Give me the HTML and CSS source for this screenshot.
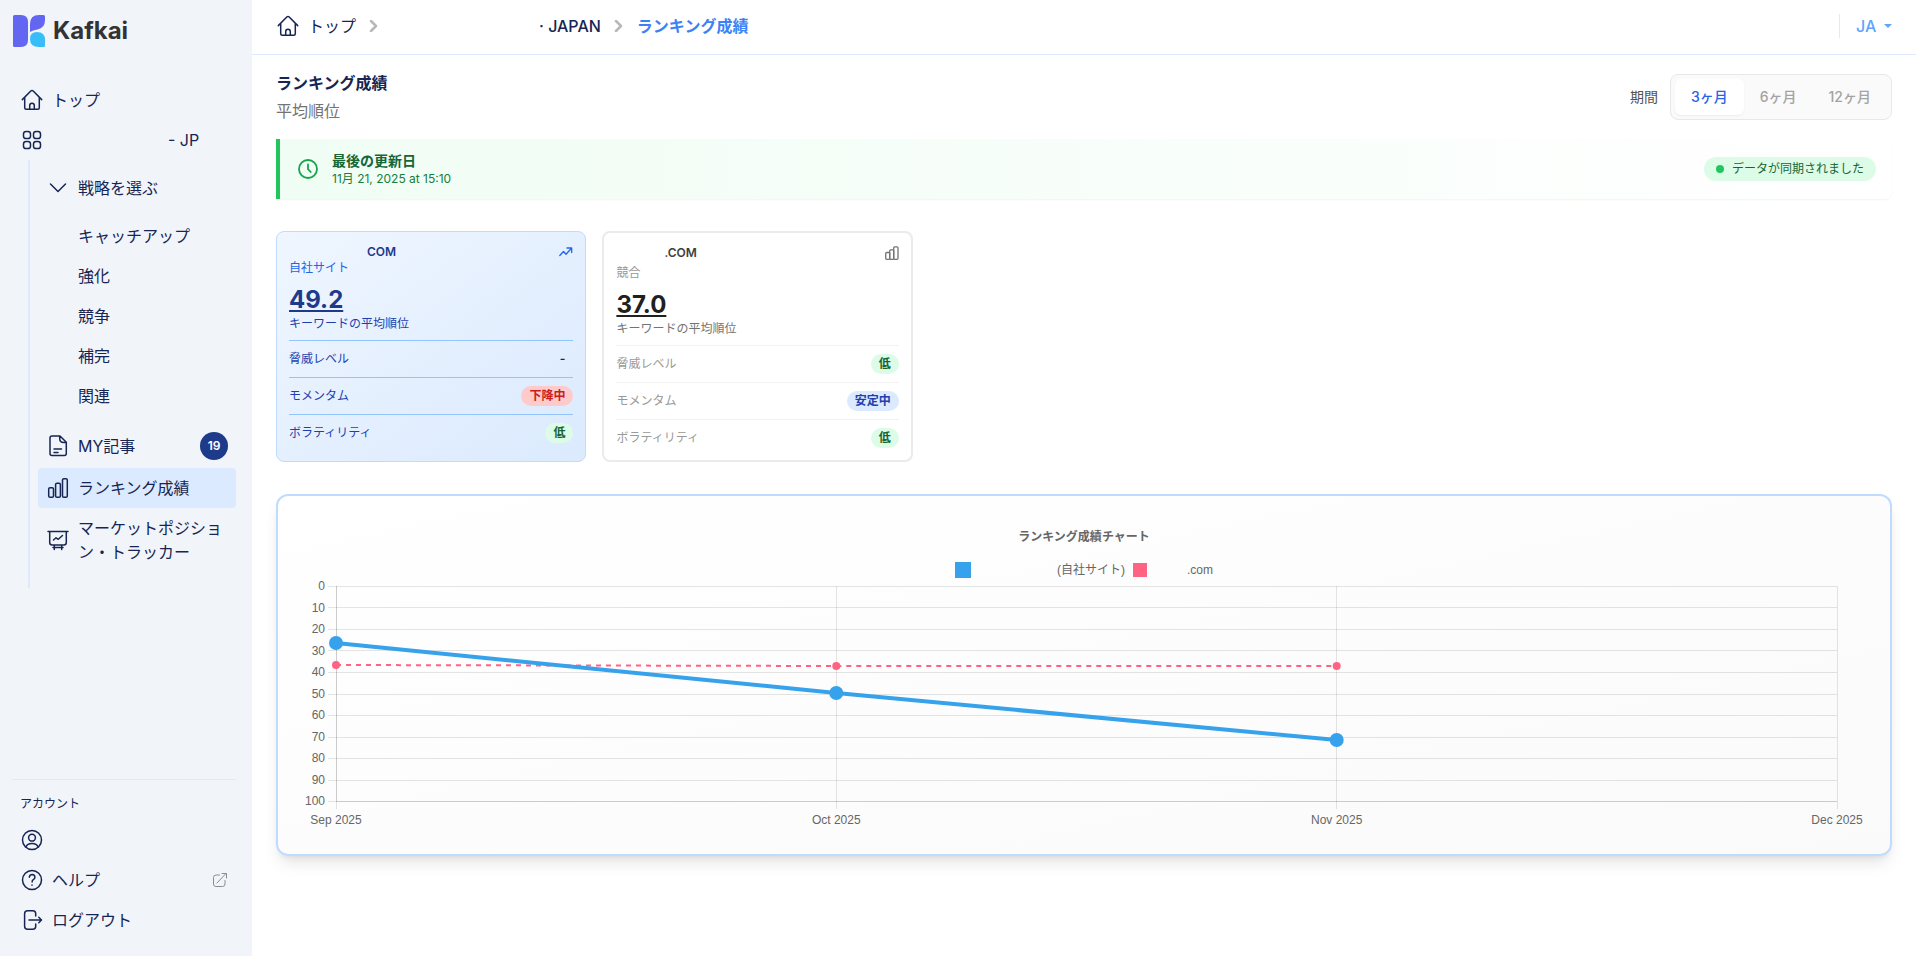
FILE: index.html
```html
<!DOCTYPE html>
<html lang="ja">
<head>
    <meta charset="UTF-8">
    <title>ランキング成績 - Kafkai</title>
    <meta name="viewport" content="width=device-width, initial-scale=1">
    <link rel="stylesheet" href="styles.css">
</head>
<body>
    <!-- shared icons -->
    <svg class="sprite" aria-hidden="true">
        <symbol id="icon-home" viewBox="0 0 24 24">
            <path d="M2.3 11.6 10.8 3q1.2-1.1 2.4 0l8.5 8.6M4.7 9.4v10.4q0 1.5 1.5 1.5h11.6q1.5 0 1.5-1.5V9.4M9.7 21.2v-3.6q0-2.3 2.3-2.3t2.3 2.3v3.6"/>
        </symbol>
        <symbol id="icon-bars" viewBox="0 0 24 24">
            <rect x="2.7" y="11.7" width="4.8" height="9.6" rx="1.4"/>
            <rect x="9.6" y="7.2" width="4.8" height="14.1" rx="1.4"/>
            <rect x="16.5" y="2.7" width="4.8" height="18.6" rx="1.4"/>
        </symbol>
        <symbol id="icon-next" viewBox="0 0 12 12">
            <path d="m3 1 5 5-5 5"/>
        </symbol>
    </svg>

    <div class="layout">
        <aside class="sidebar">
            <a href="#" class="logo">
                <svg viewBox="0 0 32 32" aria-hidden="true">
                    <path fill="#6366f1" d="M1.5 0H8q7 0 7 7v18q0 7-7 7H1.500Q0 32 0 30.500v-29Q0 0 1.500 0Z"/>
                    <path fill="#6366f1" d="M17 17V9q0-9 9-9h4.500Q32 0 32 1.500V5q0 8-7.500 9.500-5 .5-7.500 2.500Z"/>
                    <path fill="#38bdf8" d="M24 17q8 0 8 8v5.500q0 1.500-1.500 1.500H26q-9 0-9-8 0-7 7-7Z"/>
                </svg>
                <span>Kafkai</span>
            </a>

            <nav class="menu" aria-label="メイン">
                <a href="#" class="item"><svg class="icon"><use href="#icon-home"/></svg>トップ</a>
                <a href="#" class="item">
                    <svg class="icon" viewBox="0 0 24 24">
                        <rect x="3.500" y="3.500" width="7" height="7" rx="2.600"/>
                        <rect x="13.500" y="3.500" width="7" height="7" rx="2.600"/>
                        <rect x="3.500" y="13.500" width="7" height="7" rx="2.600"/>
                        <rect x="13.500" y="13.500" width="7" height="7" rx="2.600"/>
                    </svg>
                    <span class="project">- JP</span>
                </a>

                <div class="tree">
                    <a href="#" class="item">
                        <svg class="icon" viewBox="0 0 24 24"><path d="m4.500 8 7.500 7.500L19.500 8"/></svg>戦略を選ぶ
                    </a>
                    <ul class="strategies">
                        <li><a href="#" class="item">キャッチアップ</a></li>
                        <li><a href="#" class="item">強化</a></li>
                        <li><a href="#" class="item">競争</a></li>
                        <li><a href="#" class="item">補完</a></li>
                        <li><a href="#" class="item">関連</a></li>
                    </ul>
                    <a href="#" class="item">
                        <svg class="icon" viewBox="0 0 24 24">
                            <path d="M14 2H6Q4 2 4 4v15.500q0 2 2 2h12.300q2 0 2-2V8.300ZM13.700 2v2.500q0 4 4 4h2.500M8 15h7.500M8 18.500h4"/>
                        </svg>MY記事<span class="count">19</span>
                    </a>
                    <a href="#" class="item active" aria-current="page"><svg class="icon"><use href="#icon-bars"/></svg>ランキング成績</a>
                    <a href="#" class="item">
                        <svg class="icon" viewBox="0 0 24 24">
                            <path d="M2 3.500h20M3.700 3.500v11q0 2.500 2.500 2.500h11.600q2.500 0 2.500-2.500v-11M8.300 17v4.500M15.700 17v4.500M7 19.500h10M7.500 12l2.500-2.200 2.300 1.500 4.200-3.800"/>
                        </svg>
                        <span>マーケットポジション・トラッカー</span>
                    </a>
                </div>
            </nav>

            <nav class="account" aria-label="アカウント">
                <h2>アカウント</h2>
                <a href="#" class="item" aria-label="プロフィール">
                    <svg class="icon" viewBox="0 0 24 24">
                        <circle cx="12" cy="12" r="9.500"/><circle cx="12" cy="9.700" r="3.400"/>
                        <path d="M5.800 19q1.500-3.500 6.200-3.500t6.200 3.500"/>
                    </svg>
                </a>
                <a href="#" class="item">
                    <svg class="icon" viewBox="0 0 24 24">
                        <circle cx="12" cy="12" r="9.500"/>
                        <path d="M9.300 9.200q.5-2.600 2.900-2.600 2.700.2 2.700 2.700 0 1.500-1.600 2.400-1.200.8-1.200 2.300M12 17v.3"/>
                    </svg>ヘルプ
                    <svg class="external" viewBox="0 0 16 16" aria-hidden="true">
                        <path d="M7.500 3H4Q1.500 3 1.500 5.500V12q0 2.500 2.500 2.500h6.500Q13 14.500 13 12V8.500M5 11l9-9.500M10 1.500h4.500V6"/>
                    </svg>
                </a>
                <a href="#" class="item">
                    <svg class="icon" viewBox="0 0 24 24">
                        <path d="M15.700 8V5.700q0-3-3-3H7.600q-3 0-3 3v12.600q0 3 3 3h5.100q3 0 3-3V16M9 12h12.500M18.800 9.300l2.700 2.700-2.700 2.700"/>
                    </svg>ログアウト
                </a>
            </nav>
        </aside>

        <div class="page">
            <header class="topbar">
                <nav class="breadcrumb" aria-label="パンくず">
                    <a href="#" class="home"><svg class="icon"><use href="#icon-home"/></svg>トップ</a>
                    <svg class="next"><use href="#icon-next"/></svg>
                    <a href="#" class="site">· JAPAN</a>
                    <svg class="next"><use href="#icon-next"/></svg>
                    <span class="current">ランキング成績</span>
                </nav>
                <div class="language">
                    <select aria-label="言語">
                        <option>JA</option>
                        <option>EN</option>
                    </select>
                </div>
            </header>

            <main>
                <div class="heading">
                    <div>
                        <h1>ランキング成績</h1>
                        <p>平均順位</p>
                    </div>
                    <div class="period">
                        <span id="period-label">期間</span>
                        <div class="segments" role="group" aria-labelledby="period-label">
                            <button type="button" class="selected" aria-pressed="true">3ヶ月</button>
                            <button type="button" aria-pressed="false">6ヶ月</button>
                            <button type="button" aria-pressed="false">12ヶ月</button>
                        </div>
                    </div>
                </div>

                <section class="updated">
                    <svg class="clock" viewBox="0 0 20 20" aria-hidden="true"><circle cx="10" cy="10" r="9"/><path d="M10 5.500v4.700l2.700 2.800"/></svg>
                    <div>
                        <h2>最後の更新日</h2>
                        <p>11月 21, 2025 at 15:10</p>
                    </div>
                    <span class="synced">データが同期されました</span>
                </section>

                <section class="cards">
                    <article class="card own">
                        <div class="card-head">
                            <h3>COM</h3>
                            <svg viewBox="0 0 14 14" aria-hidden="true"><path d="M.8 10.500 4.500 6.500 7 9.300l5.500-6M8 3h4.700v4.500"/></svg>
                        </div>
                        <p class="kind">自社サイト</p>
                        <a href="#" class="rank">49.2</a>
                        <p class="caption">キーワードの平均順位</p>
                        <dl>
                            <div><dt>脅威レベル</dt><dd class="tag">-</dd></div>
                            <div><dt>モメンタム</dt><dd class="tag red">下降中</dd></div>
                            <div><dt>ボラティリティ</dt><dd class="tag green">低</dd></div>
                        </dl>
                    </article>

                    <article class="card rival">
                        <div class="card-head">
                            <h3>.COM</h3>
                            <svg viewBox="0 0 14 14" aria-hidden="true"><rect x=".7" y="6.500" width="4" height="6.800" rx="1"/><rect x="4.700" y="3.800" width="4" height="9.500" rx="1"/><rect x="8.700" y=".8" width="4.300" height="12.500" rx="1"/></svg>
                        </div>
                        <p class="kind">競合</p>
                        <a href="#" class="rank">37.0</a>
                        <p class="caption">キーワードの平均順位</p>
                        <dl>
                            <div><dt>脅威レベル</dt><dd class="tag green">低</dd></div>
                            <div><dt>モメンタム</dt><dd class="tag blue">安定中</dd></div>
                            <div><dt>ボラティリティ</dt><dd class="tag green">低</dd></div>
                        </dl>
                    </article>
                </section>

                <section class="chart">
                    <h2>ランキング成績チャート</h2>
                    <ul class="legend">
                        <li class="own-site">(自社サイト)</li>
                        <li class="rival-site">.com</li>
                    </ul>
                    <!-- x in percent of the plot, y is 2.15px per rank -->
                    <div class="plot-area">
                        <svg class="plot" role="img" aria-label="ランキング成績チャート">
                            <g class="grid">
                                <line x1="-8" x2="100%" y1="0" y2="0"/>
                                <line x1="-8" x2="100%" y1="21" y2="21"/>
                                <line x1="-8" x2="100%" y1="43" y2="43"/>
                                <line x1="-8" x2="100%" y1="64" y2="64"/>
                                <line x1="-8" x2="100%" y1="86" y2="86"/>
                                <line x1="-8" x2="100%" y1="108" y2="108"/>
                                <line x1="-8" x2="100%" y1="129" y2="129"/>
                                <line x1="-8" x2="100%" y1="151" y2="151"/>
                                <line x1="-8" x2="100%" y1="172" y2="172"/>
                                <line x1="-8" x2="100%" y1="194" y2="194"/>
                                <line x1="-8" x2="100%" y1="215" y2="215"/>
                                <line x1="0" x2="0" y1="0" y2="223"/>
                                <line x1="33.33%" x2="33.33%" y1="0" y2="223"/>
                                <line x1="66.67%" x2="66.67%" y1="0" y2="223"/>
                                <line x1="100%" x2="100%" y1="0" y2="223"/>
                                <line x1="0" x2="0" y1="0" y2="215"/>
                                <line x1="0" x2="100%" y1="215" y2="215"/>
                            </g>
                            <g class="y-axis">
                                <text x="-11" y="4">0</text>
                                <text x="-11" y="26">10</text>
                                <text x="-11" y="47">20</text>
                                <text x="-11" y="69">30</text>
                                <text x="-11" y="90">40</text>
                                <text x="-11" y="112">50</text>
                                <text x="-11" y="133">60</text>
                                <text x="-11" y="155">70</text>
                                <text x="-11" y="176">80</text>
                                <text x="-11" y="198">90</text>
                                <text x="-11" y="219">100</text>
                            </g>
                            <g class="x-axis">
                                <text x="0" y="238">Sep 2025</text>
                                <text x="33.33%" y="238">Oct 2025</text>
                                <text x="66.67%" y="238">Nov 2025</text>
                                <text x="100%" y="238">Dec 2025</text>
                            </g>
                            <g class="series-rival">
                                <line x1="0" y1="79" x2="33.33%" y2="80"/>
                                <line x1="33.33%" y1="80" x2="66.67%" y2="80"/>
                                <circle cx="0" cy="79" r="4"/>
                                <circle cx="33.33%" cy="80" r="4"/>
                                <circle cx="66.67%" cy="80" r="4"/>
                            </g>
                            <g class="series-own">
                                <line x1="0" y1="57" x2="33.33%" y2="107"/>
                                <line x1="33.33%" y1="107" x2="66.67%" y2="154"/>
                                <circle cx="0" cy="57" r="7"/>
                                <circle cx="33.33%" cy="107" r="7"/>
                                <circle cx="66.67%" cy="154" r="7"/>
                            </g>
                        </svg>
                    </div>
                </section>
            </main>
        </div>
    </div>
</body>
</html>
```

FILE: styles.css
```css
*{
    box-sizing: border-box;
}

body{
    margin: 0;
    font: 16px/24px Inter, "Noto Sans CJK JP", sans-serif;
    color: #172554;
    background: #fff;
}

h1, h2, h3, p, ul, dl, dd{
    margin: 0;
    padding: 0;
}

ul{
    list-style: none;
}

a{
    color: inherit;
    text-decoration: none;
}

button, select{
    font: inherit;
}

svg{
    flex: none;
    fill: none;
    stroke: currentColor;
    stroke-linecap: round;
    stroke-linejoin: round;
}

.sprite{
    display: none;
}

.icon{
    width: 24px;
    height: 24px;
    stroke-width: 1.5;
}

.layout{
    display: flex;
    min-height: 100vh;
}

/* sidebar */

.sidebar{
    display: flex;
    flex-direction: column;
    flex: none;
    width: 252px;
    padding: 15px 16px 16px 12px;
    background: #f1f5f9;
}

.logo{
    display: flex;
    align-items: center;
    gap: 8px;
    height: 32px;
    margin-bottom: 33px;
    padding-left: 1px;
    font-size: 24px;
    font-weight: 700;
    line-height: 32px;
    color: #333;
}

.logo svg{
    width: 32px;
    height: 32px;
    stroke: none;
}

.item{
    display: flex;
    align-items: center;
    gap: 8px;
    padding: 8px;
    border-radius: 4px;
}

.item:hover, .active{
    background: #dbeafe;
}

.project{
    padding-left: 116px;
}

.tree{
    margin-left: 16px;
    padding: 8px 0 16px 8px;
    border-left: 2px solid #dbeafe;
}

.strategies{
    padding: 8px 0;
}

.strategies .item{
    padding-left: 40px;
}

.count{
    width: 28px;
    height: 28px;
    margin-left: auto;
    border-radius: 50%;
    background: #1e3a8a;
    color: #fff;
    font-size: 12px;
    font-weight: 600;
    line-height: 28px;
    text-align: center;
}

.account{
    margin-top: auto;
    border-top: 1px solid #dbeafe;
}

.account h2{
    padding: 16px 8px 8px;
    font-size: 12px;
    font-weight: 400;
    line-height: 16px;
}

.external{
    width: 16px;
    height: 16px;
    margin-left: auto;
    color: #8c8c8c;
}

/* top bar */

.page{
    flex: 1;
    min-width: 0;
}

.topbar{
    display: flex;
    align-items: center;
    justify-content: space-between;
    height: 55px;
    padding: 0 24px;
    border-bottom: 1px solid #dbeafe;
}

.breadcrumb{
    display: flex;
    align-items: center;
    gap: 12px;
    padding-bottom: 2px;
}

.home{
    display: flex;
    gap: 8px;
}

.next{
    width: 12px;
    height: 12px;
    stroke-width: 2.5;
    color: #b8b8b8;
}

.site{
    padding-left: 147px;
    font-weight: 500;
}

.current{
    color: #3b82f6;
    font-weight: 600;
}

.language{
    position: relative;
    margin-bottom: 2px;
    padding-left: 16px;
    border-left: 1px solid #dbeafe;
    color: #60a5fa;
}

.language select{
    display: block;
    width: 36px;
    height: 24px;
    padding: 0;
    border: 0;
    appearance: none;
    background: none;
    color: inherit;
    font-weight: 500;
}

.language::after{
    content: "";
    position: absolute;
    top: 10px;
    right: 0;
    border: 4px solid transparent;
    border-top-color: currentColor;
    border-bottom: 0;
    pointer-events: none;
}

/* content */

main{
    padding: 16px 24px;
}

.heading{
    display: flex;
    align-items: center;
    justify-content: space-between;
    height: 52px;
    margin-bottom: 16px;
}

h1{
    font-size: 16px;
    font-weight: 600;
    line-height: 24px;
}

.heading p{
    margin-top: 4px;
    color: #737373;
}

.period{
    display: flex;
    align-items: center;
    gap: 12px;
    font-size: 14px;
    font-weight: 500;
    line-height: 20px;
    color: #525252;
}

#period-label{
    font-weight: 400;
}

.segments{
    display: flex;
    padding: 4px;
    border: 1px solid #e8e8e8;
    border-radius: 8px;
    background: #fafafa;
}

.segments button{
    padding: 8px 16px;
    border: 0;
    border-radius: 6px;
    background: none;
    color: #a3a3a3;
}

.segments .selected{
    background: #fff;
    color: #2563eb;
    box-shadow: 0 1px 2px rgba(0, 0, 0, .06);
}

.updated{
    display: flex;
    align-items: center;
    gap: 12px;
    margin-bottom: 32px;
    padding: 12px 16px 12px 18px;
    border-left: 4px solid #22c55e;
    border-radius: 0 8px 8px 0;
    background: linear-gradient(to right, #f0fdf4, #fff);
    box-shadow: 0 1px 2px rgba(0, 0, 0, .05);
}

.clock{
    width: 20px;
    height: 20px;
    margin-right: 2px;
    stroke-width: 1.8;
    color: #16a34a;
}

.updated h2{
    font-size: 14px;
    font-weight: 600;
    line-height: 20px;
    color: #166534;
}

.updated p{
    font-size: 12px;
    line-height: 16px;
    color: #15803d;
}

.synced{
    display: flex;
    align-items: center;
    gap: 8px;
    margin-left: auto;
    padding: 4px 12px;
    border-radius: 12px;
    background: #dcfce7;
    color: #166534;
    font-size: 12px;
    line-height: 16px;
}

.synced::before{
    content: "";
    width: 8px;
    height: 8px;
    border-radius: 50%;
    background: #22c55e;
}

/* site cards */

.cards{
    display: grid;
    grid-template-columns: repeat(5, 1fr);
    gap: 16px;
    margin-bottom: 32px;
}

.card{
    padding: 12px;
    border-radius: 8px;
    font-size: 12px;
    line-height: 16px;
}

.own{
    border: 1px solid #bfdbfe;
    background: linear-gradient(to bottom right, #eff6ff, #dbeafe);
    color: #1e40af;
}

.rival{
    border: 2px solid #ebebeb;
    color: #737373;
}

.card-head{
    display: flex;
    justify-content: space-between;
    align-items: center;
}

.card-head svg{
    width: 14px;
    height: 14px;
    stroke-width: 1.3;
}

.card h3{
    font-size: 12px;
    font-weight: 600;
    line-height: 16px;
}

.own h3{
    padding-left: 78px;
    color: #1e3a8a;
}

.own .card-head svg, .own .kind{
    color: #2563eb;
}

.rival h3{
    padding-left: 48px;
    color: #404040;
}

.rival .kind{
    margin-top: 4px;
}

.rival .kind, .rival dt{
    color: #999;
}

.rank{
    display: block;
    width: fit-content;
    margin-top: 8px;
    font-size: 24px;
    font-weight: 700;
    line-height: 32px;
    text-decoration: underline;
    text-decoration-thickness: 2px;
    text-underline-offset: 2px;
}

.own .rank{
    color: #1e3a8a;
}

.rival .rank{
    color: #202020;
}

.card dl{
    margin-top: 8px;
}

.card dl div{
    display: flex;
    align-items: center;
    justify-content: space-between;
    padding: 8px 0;
    border-top: 1px solid #93c5fd;
}

.card dl div:last-child{
    padding-bottom: 0;
}

.rival dl div{
    border-color: #f2f2f2;
}

.tag{
    padding: 2px 8px;
    border-radius: 10px;
    color: #172554;
    font-weight: 600;
}

.green{
    background: #dcfce7;
    color: #166534;
}

.red{
    background: #fecaca;
    color: #c81e1e;
}

.blue{
    background: #dbeafe;
    color: #1e40af;
}

/* chart */

.chart{
    padding: 33px 24px 52px;
    border: 2px solid #bfdbfe;
    border-radius: 12px;
    background: linear-gradient(to bottom right, #fff, #fafafa);
    box-shadow: 0 10px 15px -3px rgba(0, 0, 0, .1), 0 4px 6px -4px rgba(0, 0, 0, .1);
    font: 12px/16px "Liberation Sans", "Noto Sans CJK JP", sans-serif;
    color: #666;
}

.chart h2{
    font-size: 12px;
    font-weight: 700;
    line-height: 16px;
    text-align: center;
}

.legend{
    display: flex;
    justify-content: center;
    gap: 8px;
    margin: 17px 0 8px;
}

.legend li{
    display: flex;
    align-items: center;
}

.legend li::before{
    content: "";
    width: 16px;
    height: 16px;
    background: #36a2eb;
}

.legend .own-site::before{
    margin-right: 86px;
}

.legend .rival-site::before{
    width: 14px;
    height: 14px;
    margin-right: 40px;
    background: #ff6384;
}

/* room for the axis labels */
.plot-area{
    padding: 0 29px 0 34px;
}

.plot{
    display: block;
    width: 100%;
    height: 216px;
    overflow: visible;
}

.plot text{
    fill: #666;
    stroke: none;
}

.grid{
    stroke: rgba(0, 0, 0, .1);
    shape-rendering: crispEdges;
}

.y-axis{
    text-anchor: end;
}

.x-axis{
    text-anchor: middle;
}

.series-own, .series-rival{
    stroke-linecap: butt;
}

.series-own line{
    stroke: #36a2eb;
    stroke-width: 4;
}

.series-own circle{
    fill: #36a2eb;
    stroke: none;
}

.series-rival line{
    stroke: #ff6384;
    stroke-width: 2;
    stroke-dasharray: 5 5;
}

.series-rival circle{
    fill: #ff6384;
    stroke: none;
}
```
